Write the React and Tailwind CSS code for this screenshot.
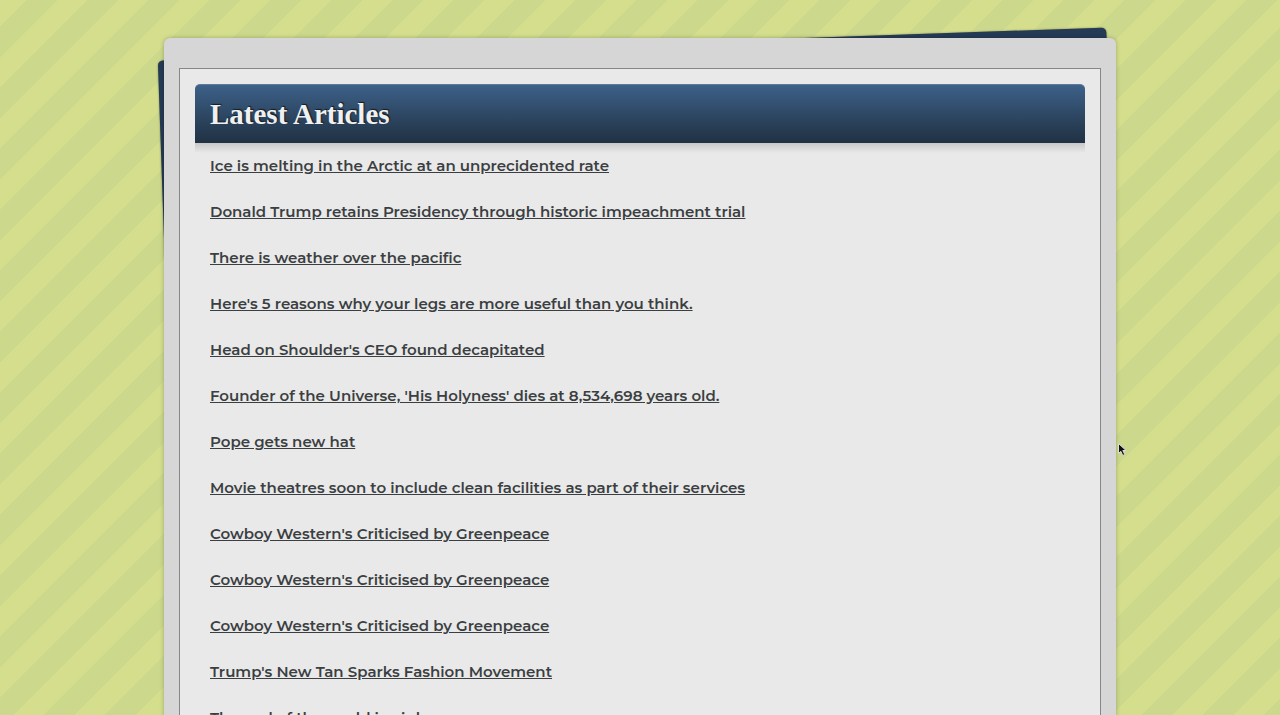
const articles = [
  "Ice is melting in the Arctic at an unprecidented rate",
  "Donald Trump retains Presidency through historic impeachment trial",
  "There is weather over the pacific",
  "Here's 5 reasons why your legs are more useful than you think.",
  "Head on Shoulder's CEO found decapitated",
  "Founder of the Universe, 'His Holyness' dies at 8,534,698 years old.",
  "Pope gets new hat",
  "Movie theatres soon to include clean facilities as part of their services",
  "Cowboy Western's Criticised by Greenpeace",
  "Cowboy Western's Criticised by Greenpeace",
  "Cowboy Western's Criticised by Greenpeace",
  "Trump's New Tan Sparks Fashion Movement",
  "The end of the world is nigh",
];

export default function App() {
  return (
    <div className="relative h-screen overflow-x-hidden overflow-y-auto bg-[linear-gradient(135deg,#d4de8d_0_22%,#ccd88b_22%_47%,#d4de8d_47%_72%,#ccd88b_72%_97%,#d4de8d_97%)] bg-size-[61px_61px] pt-[38px] [scrollbar-width:none]">
      <div className="relative mx-auto max-w-[952px]">
        <div className="absolute top-[6px] right-[6px] left-[-3px] h-[200px] -rotate-2 rounded-[5px] bg-[#253a55] shadow-[0_0_2px_rgba(0,0,0,0.4)]" />
        <main className="relative rounded-t-[6px] bg-[#d6d6d6] px-[15px] pt-[30px] shadow-[0_0_4px_rgba(0,0,0,0.25)]">
          <section className="border border-[#868888] bg-[#e9e9e9] p-[15px]">
            <header className="relative rounded-t-[5px] border-t border-[#60799a] bg-linear-to-b from-[#3d6189] to-[#203143] px-[15px] py-3 after:absolute after:inset-x-0 after:top-full after:h-[10px] after:bg-linear-to-b after:from-[#c8c8c8] after:to-transparent">
              <h1 className="font-['Liberation_Serif',serif] text-[29px] leading-[34px] font-bold text-[#f0f0f0] [text-shadow:1px_-1px_1px_#101c28]">
                Latest Articles
              </h1>
            </header>
            <ul className="relative px-[15px] font-[Montserrat,Inter,sans-serif] text-[15px] leading-[46px] font-semibold text-[#3b3f42]">
              {articles.map((title, i) => (
                <li key={i}>
                  <a href="#article" className="underline underline-offset-1">{title}</a>
                </li>
              ))}
            </ul>
          </section>
        </main>
      </div>
      <svg className="pointer-events-none absolute top-[443px] left-[1118px] h-[14px] w-[10px]" viewBox="0 0 10 14" aria-hidden="true">
        <path d="M.5.5v10l2.3-2.2 2 4.2 2-1-2-4h3.3z" fill="#111" stroke="#ddd" strokeWidth="1" />
      </svg>
    </div>
  );
}
